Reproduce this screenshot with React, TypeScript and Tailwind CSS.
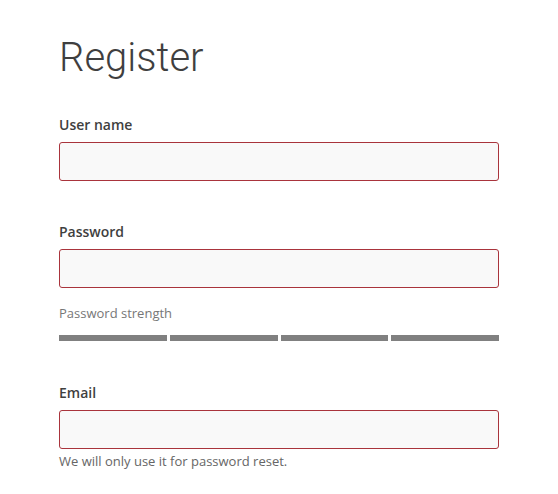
import React from "react";

const Input = () => (
  <input
    className="block w-[440px] h-[39px] rounded-[3px] border border-[#a9343c] bg-[#f9f9f9] px-2 outline-none"
    type="text"
  />
);

export default function App() {
  return (
    <div className="min-h-[494px] w-[558px] bg-white" style={{ fontFamily: '"Open Sans", sans-serif' }}>
      <div className="pl-[59px] pt-[34px]">
        <h1
          className="text-[40px] leading-[48px] font-light text-[#3f3f3f]"
          style={{ fontFamily: "Roboto, sans-serif" }}
        >
          Register
        </h1>
        <div className="mt-[34px]">
          <label className="block text-[14px] leading-[18px] font-semibold text-[#3f3f3f] mb-[8px]">User name</label>
          <Input />
        </div>
        <div className="mt-[42px]">
          <label className="block text-[14px] leading-[18px] font-semibold text-[#3f3f3f] mb-[8px]">Password</label>
          <Input />
          <div className="mt-[16px] text-[13px] leading-[18px] text-[#777]">Password strength</div>
          <div className="mt-[13px] flex w-[440px] gap-[3px]">
            <div className="h-[6px] flex-1 bg-[#808080]" />
            <div className="h-[6px] flex-1 bg-[#808080]" />
            <div className="h-[6px] flex-1 bg-[#808080]" />
            <div className="h-[6px] flex-1 bg-[#808080]" />
          </div>
        </div>
        <div className="mt-[43px]">
          <label className="block text-[14px] leading-[18px] font-semibold text-[#3f3f3f] mb-[8px]">Email</label>
          <Input />
          <div className="mt-[3px] text-[13px] leading-[18px] text-[#666]">We will only use it for password reset.</div>
        </div>
      </div>
    </div>
  );
}
